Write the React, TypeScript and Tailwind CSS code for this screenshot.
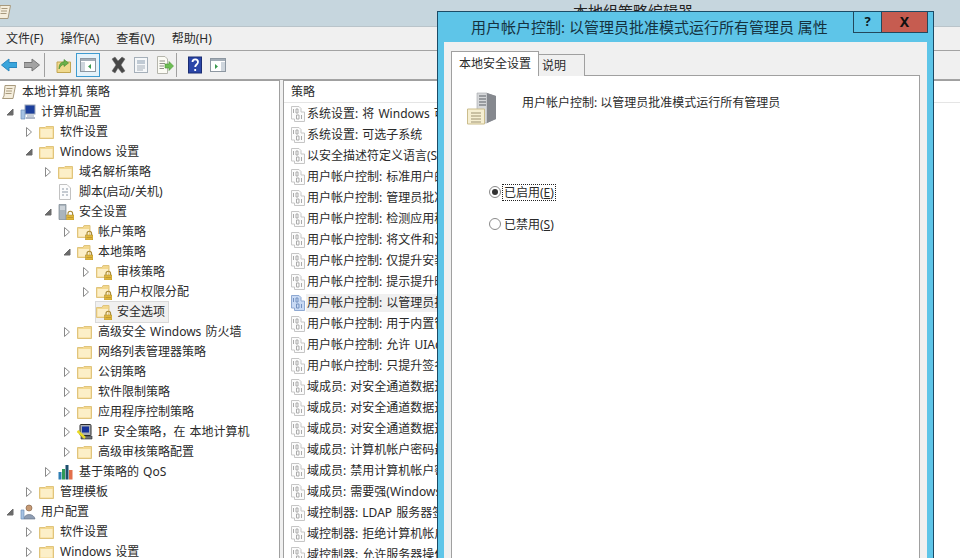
import React from 'react';

const FONT = "font-['Noto_Sans','Noto_Sans_CJK_SC',sans-serif] [word-spacing:1px]";

type IconName = 'scroll' | 'computer' | 'user' | 'folder' | 'lock' | 'script' | 'secure' | 'ip' | 'qos';

interface TreeNode {
  label: string;
  level: number;
  icon: IconName;
  arrow?: 'open' | 'closed';
  selected?: boolean;
}

const tree: TreeNode[] = [
  { label: '本地计算机 策略', level: 0, icon: 'scroll' },
  { label: '计算机配置', level: 1, icon: 'computer', arrow: 'open' },
  { label: '软件设置', level: 2, icon: 'folder', arrow: 'closed' },
  { label: 'Windows 设置', level: 2, icon: 'folder', arrow: 'open' },
  { label: '域名解析策略', level: 3, icon: 'folder', arrow: 'closed' },
  { label: '脚本(启动/关机)', level: 3, icon: 'script' },
  { label: '安全设置', level: 3, icon: 'secure', arrow: 'open' },
  { label: '帐户策略', level: 4, icon: 'lock', arrow: 'closed' },
  { label: '本地策略', level: 4, icon: 'lock', arrow: 'open' },
  { label: '审核策略', level: 5, icon: 'lock', arrow: 'closed' },
  { label: '用户权限分配', level: 5, icon: 'lock', arrow: 'closed' },
  { label: '安全选项', level: 5, icon: 'lock', selected: true },
  { label: '高级安全 Windows 防火墙', level: 4, icon: 'folder', arrow: 'closed' },
  { label: '网络列表管理器策略', level: 4, icon: 'folder' },
  { label: '公钥策略', level: 4, icon: 'folder', arrow: 'closed' },
  { label: '软件限制策略', level: 4, icon: 'folder', arrow: 'closed' },
  { label: '应用程序控制策略', level: 4, icon: 'folder', arrow: 'closed' },
  { label: 'IP 安全策略，在 本地计算机', level: 4, icon: 'ip', arrow: 'closed' },
  { label: '高级审核策略配置', level: 4, icon: 'folder', arrow: 'closed' },
  { label: '基于策略的 QoS', level: 3, icon: 'qos', arrow: 'closed' },
  { label: '管理模板', level: 2, icon: 'folder', arrow: 'closed' },
  { label: '用户配置', level: 1, icon: 'user', arrow: 'open' },
  { label: '软件设置', level: 2, icon: 'folder', arrow: 'closed' },
  { label: 'Windows 设置', level: 2, icon: 'folder', arrow: 'closed' },
];

const policies = [
  '系统设置: 将 Windows 可执行文件',
  '系统设置: 可选子系统',
  '以安全描述符定义语言(SDDL)语法',
  '用户帐户控制: 标准用户的提升提示',
  '用户帐户控制: 管理员批准模式中',
  '用户帐户控制: 检测应用程序安装',
  '用户帐户控制: 将文件和注册表写',
  '用户帐户控制: 仅提升安装在安全',
  '用户帐户控制: 提示提升时切换到',
  '用户帐户控制: 以管理员批准模式',
  '用户帐户控制: 用于内置管理员帐户',
  '用户帐户控制: 允许 UIAccess 应用',
  '用户帐户控制: 只提升签名并验证',
  '域成员: 对安全通道数据进行数字',
  '域成员: 对安全通道数据进行数字',
  '域成员: 对安全通道数据进行数字',
  '域成员: 计算机帐户密码最长使用',
  '域成员: 禁用计算机帐户密码更改',
  '域成员: 需要强(Windows 2000 或',
  '域控制器: LDAP 服务器签名要求',
  '域控制器: 拒绝计算机帐户密码更改',
  '域控制器: 允许服务器操作者计划',
];

const Folder = () => (
  <svg width="15" height="16" viewBox="0 0 15 16">
    <path d="M0.5 3.5 V14.5 H14.5 V2.5 H7 L6 3.5 Z" fill="#f3d88f" stroke="#e0c47c" />
    <path d="M1.5 5 H13.5 V13.5 H1.5 Z" fill="#fcefc8" />
  </svg>
);

const LockBadge = () => (
  <>
    <path d="M10 11 V9.5 a2.3 2.3 0 0 1 4.6 0 V11" fill="none" stroke="#a98a36" strokeWidth="1.1" />
    <rect x="8.5" y="11" width="7.5" height="5" fill="#e0b63c" stroke="#a98a2c" strokeWidth="0.5" />
    <path d="M9.5 13.5 H15" stroke="#a98a2c" strokeWidth="0.6" />
  </>
);

const TreeIcon = ({ name }: { name: IconName }) => {
  if (name === 'folder') return <Folder />;
  if (name === 'lock')
    return (
      <svg width="16" height="16" viewBox="0 0 16 16">
        <path d="M0.5 3.5 V13.5 H13 V1.5 H7 L6 3.5 Z" fill="#f3d88f" stroke="#e0c47c" />
        <path d="M1.5 5 H12 V12.5 H1.5 Z" fill="#fcefc8" />
        <LockBadge />
      </svg>
    );
  if (name === 'scroll')
    return (
      <svg width="16" height="16" viewBox="0 0 16 16">
        <path d="M4 1.5 H14.5 L12 14.5 H1.5 L3 12 Z" fill="#f5eedd" stroke="#a89a7e" />
        <path d="M5.5 4.5 H11.5 M5 7 H11 M4.5 9.5 H10.5" stroke="#a89a7e" />
      </svg>
    );
  if (name === 'computer')
    return (
      <svg width="16" height="16" viewBox="0 0 16 16">
        <rect x="5" y="1" width="10" height="9" fill="#1c3f9c" stroke="#9aa6b8" />
        <path d="M7 10.5 H14 V13 H7 Z" fill="#c4cdd9" />
        <path d="M1 6 H5 V15 H1 Z" fill="#a5c2e3" stroke="#6d8fb8" strokeWidth="0.7" />
        <path d="M6 14 H15" stroke="#8d9ab0" strokeWidth="1.4" />
      </svg>
    );
  if (name === 'user')
    return (
      <svg width="16" height="16" viewBox="0 0 16 16">
        <circle cx="9" cy="4" r="3" fill="#c79a74" stroke="#7a5a42" strokeWidth="0.6" />
        <path d="M4 15 C4 9 14 9 15 15 Z" fill="#8e9db3" stroke="#5f6d82" strokeWidth="0.6" />
        <path d="M1 6 H4 V15 H1 Z" fill="#a5c2e3" stroke="#6d8fb8" strokeWidth="0.7" />
      </svg>
    );
  if (name === 'script')
    return (
      <svg width="16" height="16" viewBox="0 0 16 16">
        <path d="M1.5 0.5 H9 L12.5 4 V15.5 H1.5 Z" fill="#fcfcfc" stroke="#c2c2c2" />
        <path d="M4 5 H6 M8 5 H10 M4 8 H10 M4 11 H6 M8 11 H10" stroke="#8d98a5" />
      </svg>
    );
  if (name === 'secure')
    return (
      <svg width="16" height="16" viewBox="0 0 16 16">
        <path d="M1 0.5 H8 V15.5 H1 Z" fill="#aab4bd" stroke="#7b8791" strokeWidth="0.7" />
        <path d="M2 3 H7 M2 5 H7" stroke="#eef1f4" />
        <LockBadge />
      </svg>
    );
  if (name === 'ip')
    return (
      <svg width="16" height="16" viewBox="0 0 16 16">
        <rect x="3" y="0.5" width="11" height="11" rx="1" fill="#a9adb3" stroke="#2c2c2c" />
        <rect x="5" y="2.5" width="7" height="6" fill="#16329a" />
        <path d="M4 12 H15 V15 H4 Z" fill="#6f7378" stroke="#2c2c2c" strokeWidth="0.6" />
        <path d="M0.5 7 L8 14" stroke="#e9da24" strokeWidth="2.4" />
      </svg>
    );
  return (
    <svg width="16" height="16" viewBox="0 0 16 16">
      <rect x="0.5" y="8" width="3" height="7.5" fill="#2f7fb5" />
      <rect x="4" y="5" width="3" height="10.5" fill="#2f9a58" />
      <rect x="7.5" y="1" width="3" height="14.5" fill="#1d4f6e" />
      <rect x="11" y="6" width="3.5" height="9.5" fill="#e36f4b" />
    </svg>
  );
};

const PolicyIcon = ({ active }: { active: boolean }) => (
  <svg width="14" height="16" viewBox="0 0 14 16">
    <path d="M0.5 0.5 H8 L10 2.5 V6 H13.5 V15.5 H3.5 V13 H0.5 Z" fill={active ? '#c9daf4' : '#fbfbfb'} stroke={active ? '#8fa9d2' : '#c6c6c6'} />
    <path d="M2.5 3 V7 M5 3 H7 V7 H5 Z M5.5 9 H8 V13 H5.5 Z M10.5 9 V13" fill="none" stroke={active ? '#7391c0' : '#aaaaaa'} />
  </svg>
);

const Arrow = ({ kind }: { kind?: 'open' | 'closed' }) => {
  if (kind === 'closed')
    return (
      <svg width="10" height="10" viewBox="0 0 10 10">
        <path d="M2.5 0.5 L7.5 5 L2.5 9.5 Z" fill="#fff" stroke="#8a8a8a" />
      </svg>
    );
  if (kind === 'open')
    return (
      <svg width="10" height="10" viewBox="0 0 10 10">
        <path d="M8 2 V8 H2 Z" fill="#6b6b6b" stroke="#6b6b6b" />
      </svg>
    );
  return <span className="block w-[10px]" />;
};

const TreeRow = ({ node }: { node: TreeNode }) => (
  <div className="flex h-5 items-center" style={{ paddingLeft: node.level === 0 ? 1 : 5 + (node.level - 1) * 19 }}>
    {node.level > 0 && <span className="mr-[5px] flex w-[10px]"><Arrow kind={node.arrow} /></span>}
    <span className={`relative flex items-center ${node.selected ? 'bg-[#f0f0f0] ring-1 ring-[#d9d9d9]' : ''}`}>
      <span className="flex w-[21px] justify-start"><TreeIcon name={node.icon} /></span>
      <span className="whitespace-nowrap pr-[3px] text-[12px] leading-5 text-[#2a2a2a]">{node.label}</span>
    </span>
  </div>
);

const ToolIcon = ({ children, w = 16, className = '' }: { children: React.ReactNode; w?: number; className?: string }) => (
  <svg width={w} height="18" viewBox={`0 0 ${w} 18`} className={className}>{children}</svg>
);

const Toolbar = () => (
  <div className="flex h-[29px] items-center border-b border-[#a3a3a3] bg-[#f0f0f0] pl-[1px]">
    <ToolIcon>
      <path d="M0.5 9 L8 3 V6.5 H16 V11.5 H8 V15 Z" fill="#39a5dc" stroke="#2a86bd" />
    </ToolIcon>
    <ToolIcon className="ml-[7px]">
      <path d="M15.5 9 L8 3 V6.5 H0 V11.5 H8 V15 Z" fill="#a3a3a3" stroke="#777" />
    </ToolIcon>
    <span className="ml-[4px] h-[24px] w-px bg-[#a0a0a0]" />
    <ToolIcon className="ml-[11px]">
      <path d="M1 6 H14.5 V16.5 H1 Z" fill="#f0d98e" stroke="#c2a652" />
      <path d="M3 13 C3 8 5 6 8 6 V3.5 L12.5 7 L8 10.5 V8.5 C6 8.5 4.5 10 3 13 Z" fill="#6bb04a" stroke="#3f8a2c" strokeWidth="0.6" />
    </ToolIcon>
    <span className="ml-[4px] flex h-[24px] w-[24px] items-center justify-center border border-[#3e9bd0] bg-[#e4f2fa]">
      <svg width="16" height="14" viewBox="0 0 16 14">
        <rect x="0.5" y="0.5" width="15" height="13" fill="#fff" stroke="#8d97a1" />
        <path d="M1 1 H15 V3 H1 Z" fill="#a3adb7" />
        <path d="M1 4 H5 V13 H1 Z" fill="#cfd6dd" />
        <path d="M11 6 L8 8.5 L11 11 Z" fill="#3c9a4e" />
      </svg>
    </span>
    <ToolIcon className="ml-[10px]">
      <path d="M2 3 L5 1 L8 5 L12 1 L15 3 L11 9 L15 15 L12 17 L8 12 L5 17 L2 15 L6 9 Z" fill="#484848" stroke="#666" strokeWidth="0.5" />
    </ToolIcon>
    <ToolIcon className="ml-[7px]">
      <rect x="1.5" y="1.5" width="13" height="15" fill="#f5f7f9" stroke="#a5afb9" />
      <path d="M4 4 H12 V8 H4 Z" fill="#c0cad4" />
      <path d="M4 10 H12 M4 12 H12 M4 14 H10" stroke="#a5afb9" />
    </ToolIcon>
    <ToolIcon w={18} className="ml-[7px]">
      <path d="M1.5 0.5 H9 L11.5 3 V17.5 H1.5 Z" fill="#fbfbf4" stroke="#b5b5ac" />
      <path d="M3.5 5 H9 M3.5 7.5 H9 M3.5 10 H8 M3.5 12.5 H8" stroke="#8f8f88" />
      <path d="M9 8 H13 V5.5 L17.5 10 L13 14.5 V12 H9 Z" fill="#6bbd53" stroke="#4a9436" strokeWidth="0.6" />
    </ToolIcon>
    <span className="ml-[2px] h-[24px] w-px bg-[#a0a0a0]" />
    <ToolIcon w={14} className="ml-[11px]">
      <rect x="0.5" y="1" width="13" height="16" fill="#2b46a8" stroke="#1a2c73" />
      <path d="M4.5 6 C4.5 2.5 10 2.5 10 6 C10 8.5 7.2 8.5 7.2 11 M7.2 13 V15" fill="none" stroke="#fff" strokeWidth="1.8" />
    </ToolIcon>
    <span className="ml-[8px] flex">
      <svg width="16" height="14" viewBox="0 0 16 14">
        <rect x="0.5" y="0.5" width="15" height="13" fill="#fff" stroke="#8d97a1" />
        <path d="M1 1 H15 V3 H1 Z" fill="#a3adb7" />
        <path d="M11 4 H15 V13 H11 Z" fill="#cfd6dd" />
        <path d="M5 6 L8 8.5 L5 11 Z" fill="#3c9a4e" />
      </svg>
    </span>
  </div>
);

const ServerIcon = () => (
  <svg width="32" height="34" viewBox="0 0 32 34">
    <path d="M11 1 H21 L30 4 V27 L21 31 H11 Z" fill="#a6a9ad" />
    <path d="M11 1 H21 V31 H11 Z" fill="#d6d8da" stroke="#a3a6aa" strokeWidth="0.6" />
    <path d="M13 4 H20 M13 7 H20 M13 10 H20 M13 13 H20" stroke="#84878c" strokeWidth="1.3" />
    <path d="M21 1 L30 4 V27 L21 31 Z" fill="#85888e" />
    <path d="M1.5 17 H18.5 V32 H1.5 Z" fill="#f6efd2" stroke="#cbbd8c" />
    <path d="M5 21 H15 M5 24 H15 M5 27 H15 M5 30 H15" stroke="#9d9272" />
  </svg>
);

const Radio = ({ checked }: { checked?: boolean }) => (
  <span className="flex h-[12px] w-[12px] shrink-0 items-center justify-center rounded-full border border-[#8a8a8a] bg-white">
    {checked && <span className="h-[6px] w-[6px] rounded-full bg-[#333]" />}
  </span>
);

const Dialog = () => (
  <div className="absolute top-[11px] left-[437px] flex h-[547px] w-[497px] flex-col border border-b-0 border-[#1b4b66] bg-[#5ec5e8]">
    <div className="flex h-[30px] shrink-0 items-start">
      <span className="ml-[33px] whitespace-nowrap pt-[4px] text-[15px] leading-[22px] text-[#15323f] [word-spacing:0]">
        用户帐户控制: 以管理员批准模式运行所有管理员 属性
      </span>
      <div className="ml-auto mr-[5px] flex h-[21px]">
        <span className="flex w-[29px] items-center justify-center border-r border-b border-l border-[#23485c] text-[13px] font-bold text-[#0b1a24]">?</span>
        <span className="flex w-[46px] items-center justify-center border-r border-b border-[#23485c] bg-[#c65c50] text-[14px] font-bold leading-none text-[#111]">X</span>
      </div>
    </div>
    <div className="mx-[6px] flex min-h-0 flex-1 flex-col bg-[#f0f0f0] px-[7px] pt-[9px]">
      <div className="relative z-10 -mb-px flex items-end">
        <span className="flex h-[25px] w-[88px] items-center justify-center border border-b-0 border-[#a0a0a0] bg-white text-[12px] text-[#2a2a2a]">本地安全设置</span>
        <span className="flex h-[22px] w-[46px] items-center border border-b-0 border-l-0 border-[#a0a0a0] bg-[#f0f0f0] pl-[3px] text-[12px] text-[#2a2a2a]">说明</span>
      </div>
      <div className="flex-1 border border-b-0 border-[#a0a0a0] bg-white pt-[16px] pl-[14px]">
        <div className="flex items-start">
          <ServerIcon />
          <span className="ml-[24px] pt-[1px] text-[12px] leading-5 text-[#2a2a2a] [word-spacing:0]">用户帐户控制: 以管理员批准模式运行所有管理员</span>
        </div>
        <div className="mt-[57px] flex flex-col gap-[14px] pl-[23px]">
          <div className="flex h-[18px] items-center">
            <Radio checked />
            <span className="ml-[1px] border border-dotted border-[#222] px-[1px] text-[12px] leading-[15px] text-[#2a2a2a]">已启用(<span className="underline">E</span>)</span>
          </div>
          <div className="flex h-[18px] items-center">
            <Radio />
            <span className="ml-[2px] px-[1px] text-[12px] leading-[15px] text-[#2a2a2a]">已禁用(<span className="underline">S</span>)</span>
          </div>
        </div>
      </div>
    </div>
  </div>
);

export default function App() {
  return (
    <div className={`relative h-[558px] w-[960px] overflow-hidden bg-[#f0f0f0] ${FONT}`}>
      <div className="flex h-[27px] items-start border-b border-[#b9c4ca] bg-[#c6d6de]">
        <span className="mt-[4px] flex w-3 overflow-hidden"><span className="-ml-1"><TreeIcon name="scroll" /></span></span>
        <span className="ml-[561px] pt-[1px] text-[15px] leading-[20px] whitespace-nowrap text-[#222]">本地组策略编辑器</span>
      </div>
      <div className="flex h-[24px] items-center gap-[17px] border-b border-[#a3a3a3] bg-[#f0f0f0] pl-[6px] text-[12px] text-[#2a2a2a]">
        <span>文件(F)</span>
        <span>操作(A)</span>
        <span>查看(V)</span>
        <span>帮助(H)</span>
      </div>
      <Toolbar />
      <div className="flex h-[478px] gap-[3px]">
        <div className="w-[280px] shrink-0 overflow-hidden border-r border-t border-[#a0a0a0] bg-white pt-px">
          {tree.map((node, i) => <TreeRow key={i} node={node} />)}
        </div>
        <div className="min-w-0 flex-1 overflow-hidden border-t border-l border-[#a0a0a0] bg-white">
          <div className="flex h-[22px] items-center border-b border-[#e5e5e5] pl-[7px] text-[12px] text-[#2a2a2a]">策略</div>
          {policies.map((p, i) => (
            <div key={i} className="flex h-[21px] items-center pl-[7px]">
              <PolicyIcon active={i === 9} />
              <span className={`ml-[1px] w-[200px] whitespace-nowrap pl-[1px] text-[12px] text-[#2a2a2a] ${i === 9 ? 'bg-[#f0f0f0]' : ''}`}>{p}</span>
            </div>
          ))}
        </div>
      </div>
      <Dialog />
    </div>
  );
}
